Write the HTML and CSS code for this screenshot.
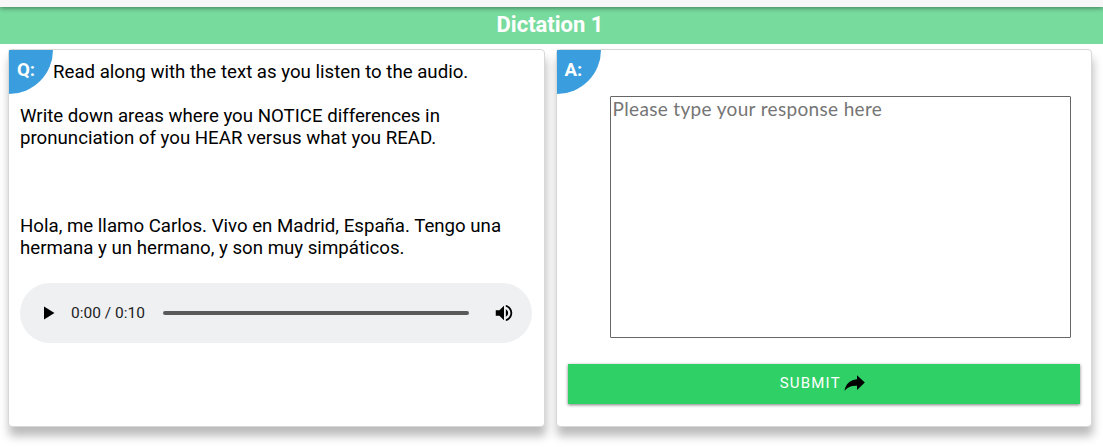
FILE: index.html
```
<!DOCTYPE html>
<html lang="en">
<head>
  <meta charset="UTF-8">
  <title>Dictation 1</title>
  <link rel="stylesheet" href="styles.css">
</head>
<body>

  <header class="navbar"></header>
  <h1 class="title">Dictation 1</h1>

  <main class="cards">
    <section class="card question">
      <span class="badge">Q:</span>
      <p class="intro">Read along with the text as you listen to the audio.</p>
      <p>Write down areas where you NOTICE differences in<br>pronunciation of you HEAR versus what you READ.</p>
      <p class="passage">Hola, me llamo Carlos. Vivo en Madrid, España. Tengo una<br>hermana y un hermano, y son muy simpáticos.</p>

      <div class="player">
        <svg class="play" width="12" height="14" viewBox="0 0 12 14"><path d="M1 0.5v13L11.5 7z"/></svg>
        <span class="time">0:00 / 0:10</span>
        <div class="track"></div>
        <svg class="volume" width="24" height="24" viewBox="0 0 24 24"><path d="M3 9v6h4l5 5V4L7 9H3zm13.5 3c0-1.77-1.02-3.29-2.5-4.03v8.05c1.48-.73 2.5-2.25 2.5-4.02zM14 3.23v2.06c2.89.86 5 3.54 5 6.71s-2.11 5.85-5 6.71v2.06c4.01-.91 7-4.49 7-8.77s-2.99-7.86-7-8.77z"/></svg>
      </div>
    </section>

    <section class="card answer">
      <span class="badge">A:</span>
      <form id="answerForm">
        <textarea class="response" placeholder="Please type your response here"></textarea>
        <button class="submit" type="submit">
          <span>SUBMIT</span>
          <svg width="21" height="16" viewBox="0 0 21 16"><path d="M13 0.2L20.8 7.5L13 15V10.8C7.5 10.4 4 12 0.5 15.8C1.5 9.5 5.5 4.7 13 4.2z"/></svg>
        </button>
      </form>
    </section>
  </main>

</body>
</html>
```
FILE: styles.css
```
* {
  box-sizing: border-box;
}

body {
  margin: 0;
  height: 447px;
  overflow: hidden;
  background: #fff;
  color: #000;
  font-family: Roboto, sans-serif;
  font-size: 18.67px;
  line-height: 22px;
}

.navbar {
  position: relative;
  height: 7px;
  background: #f7f7f7;
  box-shadow: 0 1px 5px rgba(0, 0, 0, 0.45);
}

.title {
  height: 37px;
  margin: 0;
  background: #77db9e;
  color: #fff;
  font-size: 22px;
  font-weight: 700;
  line-height: 36px;
  text-align: center;
  padding-right: 3px;
}

.cards {
  display: flex;
  gap: 11px;
  padding: 5px 11px 0 8px;
}

.card {
  position: relative;
  flex: 1;
  height: 378px;
  padding: 11px;
  background: #fff;
  border: 1px solid #d8d8d8;
  border-radius: 4px;
  box-shadow: 1px 9px 10px rgba(0, 0, 0, 0.27);
}

.badge {
  position: absolute;
  top: 0;
  left: 0;
  width: 44px;
  height: 44px;
  padding-left: 8px;
  background: #3a9ddd;
  border-bottom-right-radius: 100%;
  color: #fff;
  font-weight: 700;
  line-height: 40px;
}

.card p {
  margin: 0 0 22px;
  white-space: nowrap;
}

.card .intro {
  padding-left: 33px;
}

.card .passage {
  margin: 66px 0 24px;
}

.player {
  display: flex;
  align-items: center;
  width: 512px;
  height: 60px;
  padding: 0 16px 0 23px;
  background: #eff0f2;
  border-radius: 30px;
}

.time {
  margin-left: 16px;
  color: #222;
  font-size: 15.5px;
}

.track {
  flex: 1;
  height: 4px;
  margin: 0 23px 0 18px;
  background: #5a5a5a;
  border-radius: 2px;
}

.volume {
  width: 24px;
  height: 22px;
}

.response {
  display: block;
  width: 461px;
  height: 242px;
  margin: 35px 0 26px 42px;
  padding: 1px 2px;
  border: 1px solid #666;
  border-radius: 1px;
  resize: none;
  font-family: Lato, sans-serif;
  font-size: 19px;
  letter-spacing: 0.34px;
  line-height: 22px;
}

.response::placeholder {
  color: #757575;
}

.submit {
  display: flex;
  align-items: center;
  justify-content: center;
  gap: 3px;
  width: 100%;
  height: 40px;
  padding: 0 3px 2px 0;
  background: #2fd066;
  border: 0;
  color: #fff;
  font-family: Roboto, sans-serif;
  font-size: 15px;
  font-weight: 400;
  letter-spacing: 1.2px;
  box-shadow: 0 1px 3px rgba(0, 0, 0, 0.5);
}
```
